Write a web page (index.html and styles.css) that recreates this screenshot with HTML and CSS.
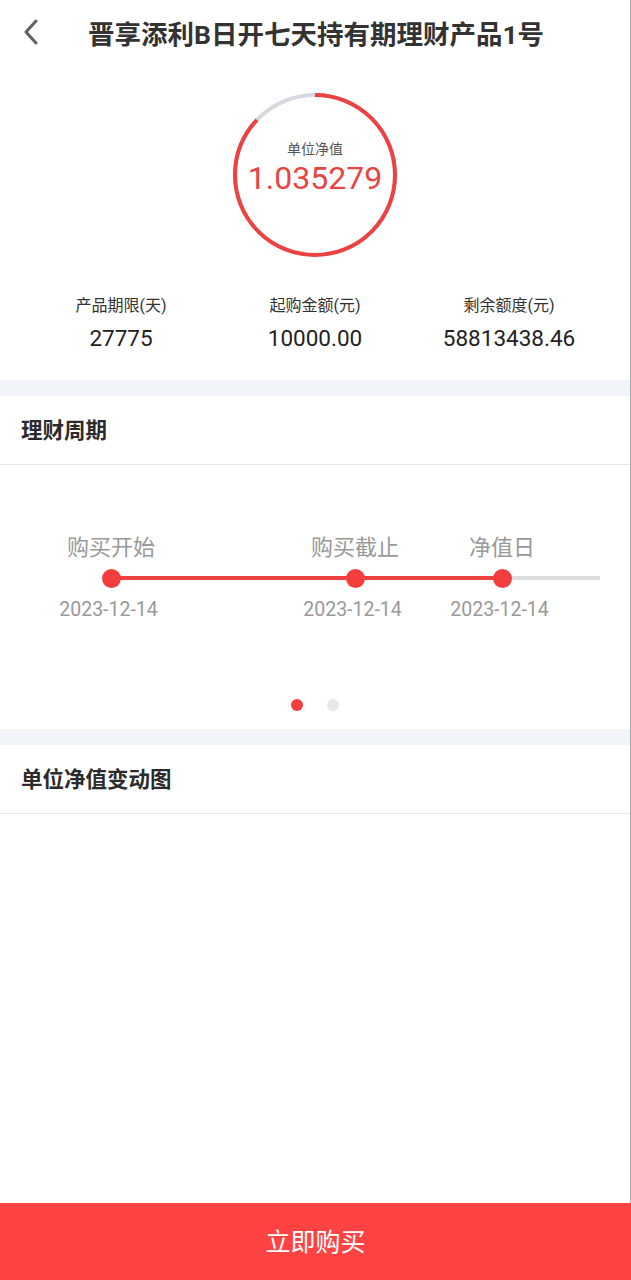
FILE: index.html
```html
<!DOCTYPE html>
<html lang="zh-CN">
<head>
    <meta charset="UTF-8">
    <meta name="viewport" content="width=device-width, initial-scale=1.0">
    <title>理财产品详情</title>
    <link rel="stylesheet" href="styles.css">
</head>
<body>
    <div class="page">
        <div class="conteudo">
            <div class="topo">
                <a class="voltar">
                    <svg width="18" height="26" viewBox="0 0 18 26"><path d="M14 2 L4 13 L14 24" fill="none" stroke="#606060" stroke-width="3" stroke-linecap="round" stroke-linejoin="round"/></svg>
                </a>
                <h1 class="titulo">晋享添利B日开七天持有期理财产品1号</h1>
            </div>

            <div class="resumo">
                <div class="anel">
                    <svg width="166" height="166" viewBox="0 0 166 166">
                        <circle cx="83" cy="83" r="80" fill="none" stroke="#d6d9df" stroke-width="4"/>
                        <circle cx="83" cy="83" r="80" fill="none" stroke="#ee4242" stroke-width="4" stroke-dasharray="437 600" transform="rotate(-90 83 83)"/>
                    </svg>
                    <div class="anel-texto">
                        <span class="anel-rotulo">单位净值</span>
                        <span class="anel-valor">1.035279</span>
                    </div>
                </div>

                <div class="dados">
                    <div class="dado">
                        <span class="dado-rotulo">产品期限(天)</span>
                        <span class="dado-valor">27775</span>
                    </div>
                    <div class="dado">
                        <span class="dado-rotulo">起购金额(元)</span>
                        <span class="dado-valor">10000.00</span>
                    </div>
                    <div class="dado">
                        <span class="dado-rotulo">剩余额度(元)</span>
                        <span class="dado-valor">58813438.46</span>
                    </div>
                </div>
            </div>

            <div class="faixa"></div>

            <div class="secao">
                <h2 class="secao-titulo">理财周期</h2>
                <div class="ciclo">
                    <div class="linha"></div>

                    <span class="passo-nome p1">购买开始</span>
                    <span class="ponto p1"></span>
                    <span class="passo-data p1">2023-12-14</span>

                    <span class="passo-nome p2">购买截止</span>
                    <span class="ponto p2"></span>
                    <span class="passo-data p2">2023-12-14</span>

                    <span class="passo-nome p3">净值日</span>
                    <span class="ponto p3"></span>
                    <span class="passo-data p3">2023-12-14</span>
                </div>
                <div class="paginas">
                    <span class="pagina ativa"></span>
                    <span class="pagina"></span>
                </div>
            </div>

            <div class="faixa"></div>

            <div class="secao">
                <h2 class="secao-titulo">单位净值变动图</h2>
                <div class="grafico"></div>
            </div>
        </div>

        <a class="comprar">立即购买</a>
    </div>
</body>
</html>
```

FILE: styles.css
```css
* {
    box-sizing: border-box;
    font-family: Roboto, "Noto Sans CJK SC", sans-serif;
}

body {
    margin: 0;
    background: #fff;
}

.page {
    display: flex;
    flex-direction: column;
    height: 1280px;
}

.conteudo {
    flex-grow: 1;
    border-right: 1px solid #a8a8a8;
}

.topo {
    display: flex;
    align-items: center;
    height: 68px;
    padding: 0 0 4px 22px;
}

.voltar {
    display: flex;
    width: 66px;
}

.titulo {
    margin: 0;
    font-size: 26.5px;
    font-weight: 700;
    color: #333;
    white-space: nowrap;
}

.resumo {
    padding: 24px 24px 0 24px;
    height: 312px;
}

.anel {
    position: relative;
    width: 166px;
    height: 166px;
    margin: 0 auto;
}

.anel svg {
    display: block;
}

.anel-texto {
    position: absolute;
    inset: 0;
    display: flex;
    flex-direction: column;
    align-items: center;
    justify-content: center;
    padding-bottom: 14px;
}

.anel-rotulo {
    font-size: 14px;
    color: #555;
    line-height: 20px;
}

.anel-valor {
    font-size: 32px;
    color: #e84444;
    line-height: 38px;
}

.dados {
    display: flex;
    margin-top: 37px;
}

.dado {
    flex: 1;
    display: flex;
    flex-direction: column;
    align-items: center;
}

.dado-rotulo {
    font-size: 16px;
    color: #333;
    line-height: 22px;
}

.dado-valor {
    font-size: 22.5px;
    color: #222;
    line-height: 32px;
    margin-top: 5px;
}

.faixa {
    height: 16px;
    background: #f1f4f8;
}

.secao-titulo {
    margin: 0;
    padding: 2px 0 0 21px;
    height: 69px;
    line-height: 66px;
    font-size: 21.5px;
    font-weight: 700;
    color: #2b2b2b;
    border-bottom: 1px solid #e8e8e8;
}

.ciclo {
    display: grid;
    grid-template-columns: 51px 120px 124px 120px 27px 120px 1fr;
    grid-template-rows: 28px 18px 24px;
    row-gap: 10px;
    padding-top: 66px;
    align-items: center;
}

.linha {
    grid-column: 2 / -1;
    grid-row: 2;
    height: 4px;
    margin: 0 30px 0 60px;
    background: linear-gradient(to right, #ee4242 391px, #dedede 391px);
}

.passo-nome {
    grid-row: 1;
    justify-self: center;
    font-size: 22px;
    color: #999;
    white-space: nowrap;
}

.ponto {
    grid-row: 2;
    justify-self: center;
    width: 19px;
    height: 19px;
    border-radius: 50%;
    background: #f43d3d;
    z-index: 1;
}

.passo-data {
    grid-row: 3;
    justify-self: center;
    margin-right: 5px;
    font-size: 19.5px;
    color: #999;
    white-space: nowrap;
}

.p1 { grid-column: 2; }
.p2 { grid-column: 4; }
.p3 { grid-column: 6; }

.paginas {
    display: flex;
    justify-content: center;
    gap: 24px;
    padding: 78px 0 18px 0;
}

.pagina {
    width: 12px;
    height: 12px;
    border-radius: 50%;
    background: #e8e8e8;
}

.pagina.ativa {
    background: #f43d3d;
}

.grafico {
    height: 389px;
}

.comprar {
    display: flex;
    align-items: center;
    justify-content: center;
    height: 78px;
    padding-bottom: 3px;
    background: #ff4343;
    color: #fff;
    font-size: 25px;
}
```
